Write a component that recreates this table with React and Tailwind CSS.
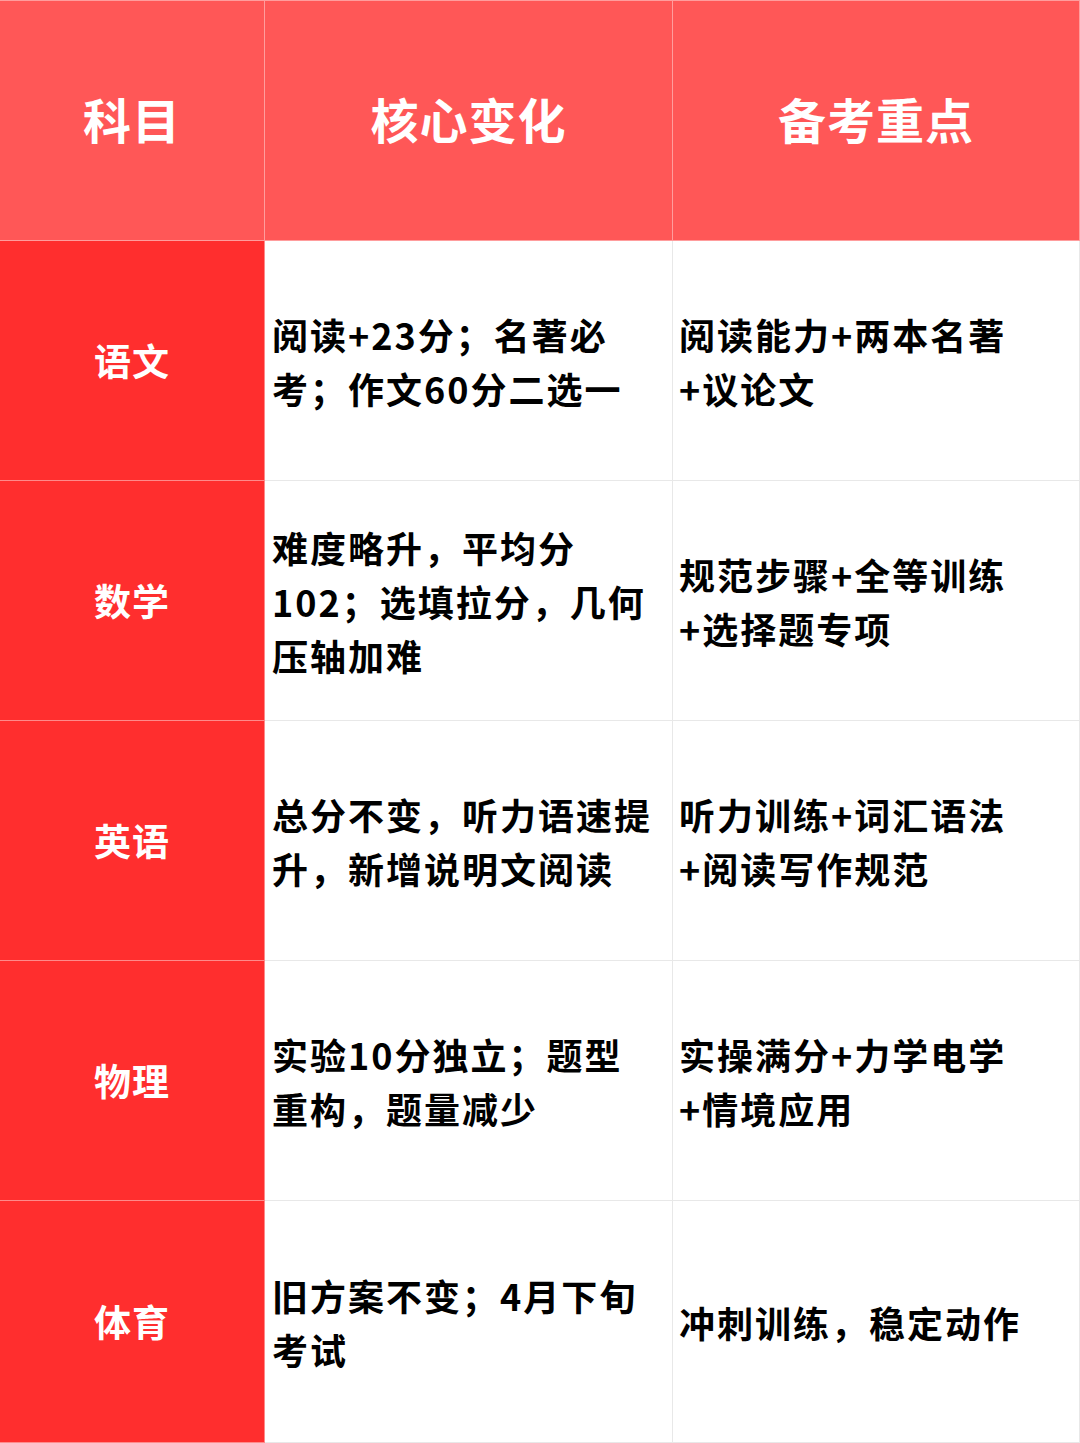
import React from "react";

const rows = [
  { s: "语文", a: ["阅读+23分；名著必", "考；作文60分二选一"], b: ["阅读能力+两本名著", "+议论文"] },
  { s: "数学", a: ["难度略升，平均分", "102；选填拉分，几何", "压轴加难"], b: ["规范步骤+全等训练", "+选择题专项"] },
  { s: "英语", a: ["总分不变，听力语速提", "升，新增说明文阅读"], b: ["听力训练+词汇语法", "+阅读写作规范"] },
  { s: "物理", a: ["实验10分独立；题型", "重构，题量减少"], b: ["实操满分+力学电学", "+情境应用"] },
  { s: "体育", a: ["旧方案不变；4月下旬", "考试"], b: ["冲刺训练，稳定动作"] },
];

const font = { fontFamily: '"Noto Sans CJK SC", "Noto Sans", sans-serif' };

function Lines({ lines }) {
  return (
    <div className="flex flex-col">
      {lines.map((l, i) => (
        <span key={i} className="whitespace-nowrap">{l}</span>
      ))}
    </div>
  );
}

export default function App() {
  return (
    <div className="w-[1080px] h-[1443px] bg-white overflow-hidden" style={font}>
      <div className="grid grid-cols-[265px_408px_407px] grid-rows-[241px_240px_240px_240px_240px_242px]">
        <div className="bg-[#ff5757] border-r border-b border-t border-[#ff9d9d] flex items-center justify-center pb-[5px] text-white text-[48px] font-bold tracking-[1px]">科目</div>
        <div className="bg-[#ff5757] border-r border-b border-t border-[#ff9d9d] flex items-center justify-center pb-[5px] text-white text-[48px] font-bold tracking-[1px]">核心变化</div>
        <div className="bg-[#ff5757] border-r border-b border-t border-[#ff9d9d] flex items-center justify-center pb-[5px] text-white text-[48px] font-bold tracking-[1px]">备考重点</div>
        {rows.map((r, i) => (
          <React.Fragment key={i}>
            <div className="bg-[#ff2e2e] border-b border-r border-[#ff8a8a] flex items-center justify-center text-white text-[37px] font-bold tracking-[1px]">{r.s}</div>
            <div className="border-r border-b border-[#e8e8e8] flex items-center pl-[7px] text-black text-[36px] leading-[54px] font-bold tracking-[2px]">
              <Lines lines={r.a} />
            </div>
            <div className="border-r border-b border-[#e8e8e8] flex items-center pl-[6px] text-black text-[36px] leading-[54px] font-bold tracking-[2px]">
              <Lines lines={r.b} />
            </div>
          </React.Fragment>
        ))}
      </div>
    </div>
  );
}
